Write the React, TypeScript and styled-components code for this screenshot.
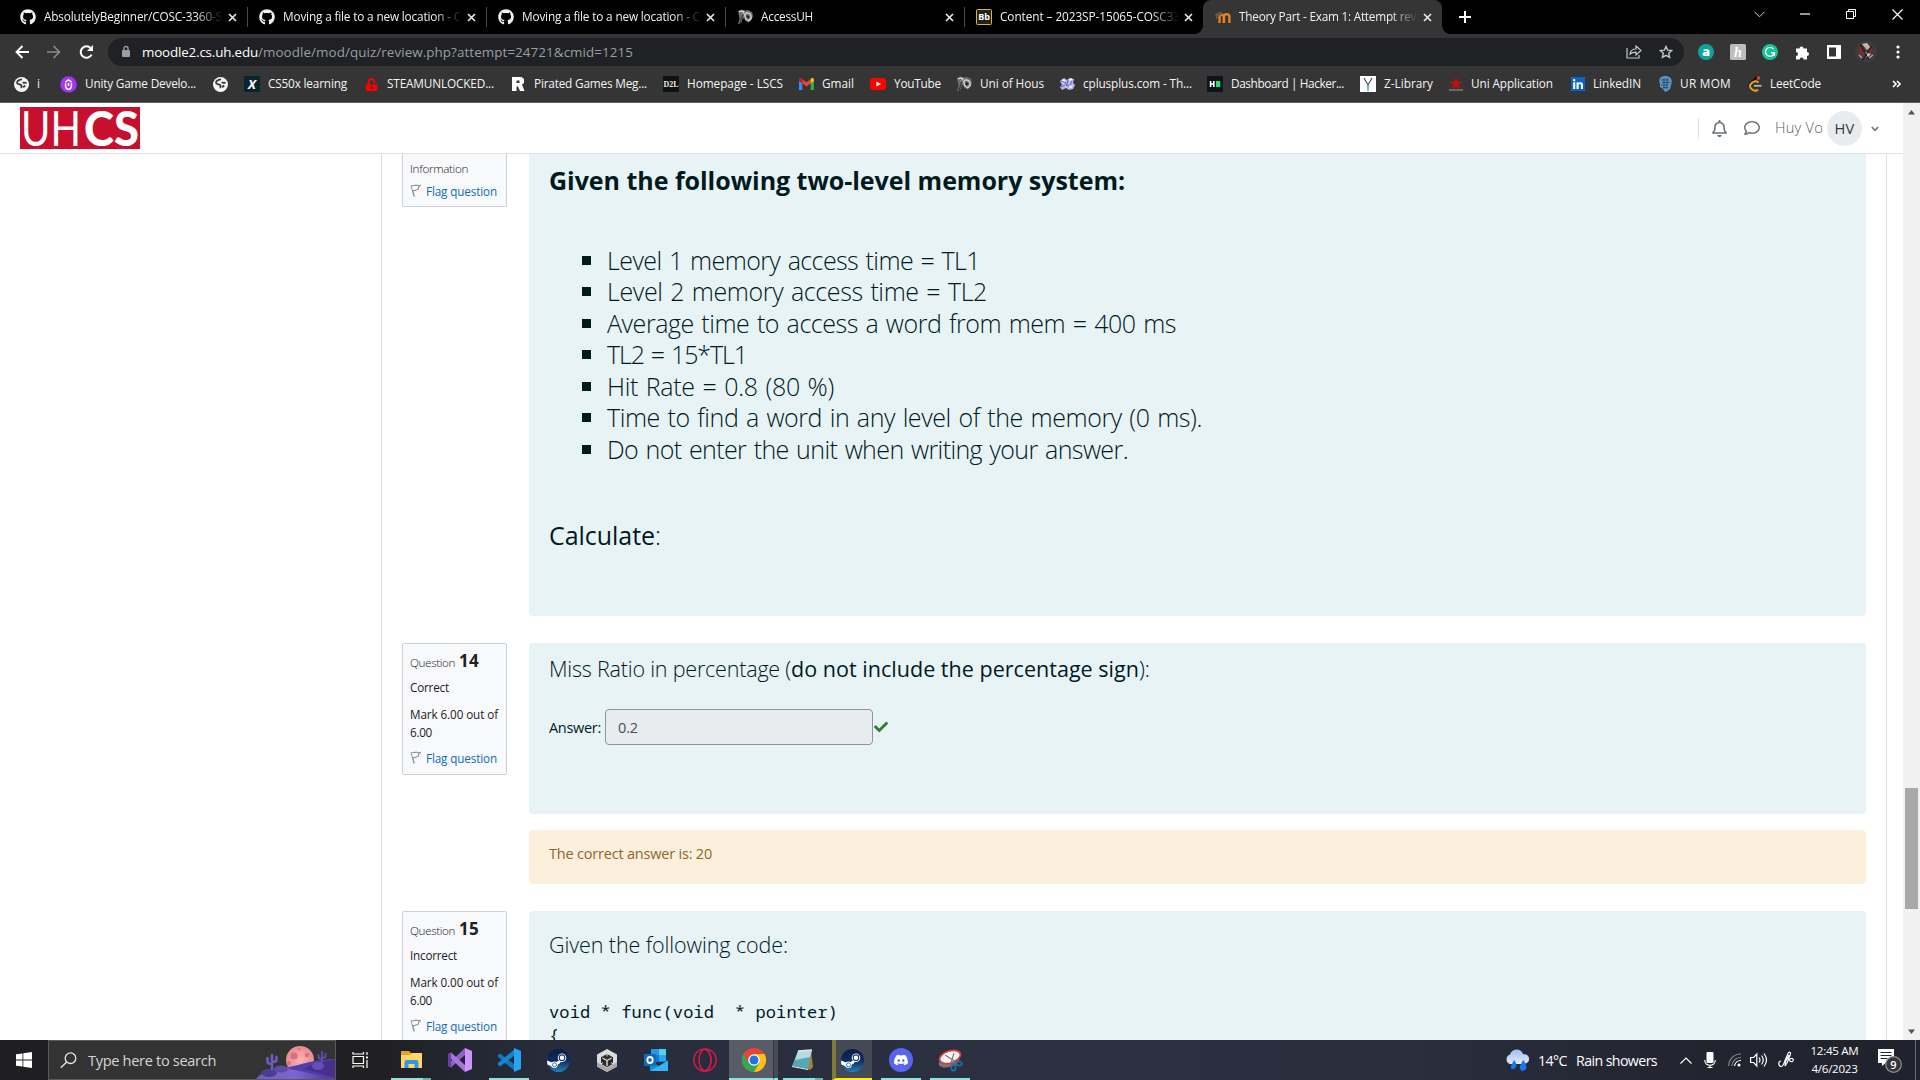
import React, { useLayoutEffect, useRef, useState } from 'react';
import styled, { createGlobalStyle } from 'styled-components';
import { FaGithub, FaLinkedin, FaRegBell, FaRegComment, FaDiscord, FaCheck, FaUnlockAlt } from 'react-icons/fa';

const SANS = '"Open Sans", "Noto Sans", sans-serif';

const Global = createGlobalStyle`
  * { box-sizing: border-box; }
  body { margin: 0; overflow: hidden; font-family: ${SANS}; background: #fff; }
  svg { display: block; flex: none; }
`;

/* ---------- text whose tracking is adjusted to reach a given width ---------- */

const Run = styled.span`
  white-space: pre;
  flex: none;
`;

function Fit({ w, children }: { w: number; children: string }) {
  const ref = useRef<HTMLSpanElement>(null);
  const [track, setTrack] = useState(0);
  useLayoutEffect(() => {
    if (!ref.current) return;
    const natural = ref.current.getBoundingClientRect().width;
    setTrack((w - natural) / children.length);
  }, []);
  return (
    <Run ref={ref} style={{ letterSpacing: `${track}px` }}>
      {children}
    </Run>
  );
}

/* ---------- frame ---------- */

const Screen = styled.div`
  width: 1920px;
  height: 1080px;
  display: flex;
  flex-direction: column;
  overflow: hidden;
`;

const TabStrip = styled.div`
  height: 34px;
  flex: none;
  display: flex;
  background: #000;
  padding-left: 9px;
`;

const Tab = styled.div<{ $last?: boolean }>`
  width: 239px;
  height: 34px;
  display: flex;
  align-items: center;
  padding: 0 11px 0 11px;
  font-size: 11.8px;
  color: #f1f1f1;
  background: linear-gradient(#4a4a4a, #4a4a4a) ${(p) => (p.$last ? '260px' : '238px')} 7px / 1px 20px no-repeat;
`;

const ActiveTab = styled.div`
  width: 239px;
  height: 34px;
  display: flex;
  align-items: center;
  padding: 0 10px 0 12px;
  margin-left: -1px;
  font-size: 11.8px;
  color: #f1f1f1;
  background: #353535;
  border-radius: 8px 8px 0 0;
  position: relative;
  &::before,
  &::after {
    content: '';
    position: absolute;
    bottom: 0;
    width: 8px;
    height: 8px;
  }
  &::before { left: -8px; background: radial-gradient(circle at 0 0, transparent 7.5px, #353535 8px); }
  &::after { right: -8px; background: radial-gradient(circle at 100% 0, transparent 7.5px, #353535 8px); }
`;

const TabTitle = styled.div`
  flex: 1;
  height: 20px;
  line-height: 18px;
  margin: 0 5px 0 8px;
  overflow: hidden;
  display: flex;
  mask-image: linear-gradient(90deg, #000 calc(100% - 28px), transparent);
`;

const NewTab = styled.div`
  width: 44px;
  padding-left: 2px;
  display: grid;
  place-items: center;
`;

const WindowButtons = styled.div`
  margin-left: auto;
  display: flex;
  height: 28px;
  > div { width: 46px; display: grid; place-items: center; }
`;

const Toolbar = styled.div`
  height: 36px;
  flex: none;
  display: flex;
  align-items: center;
  background: #353535;
  padding-left: 6px;
`;

const ToolSlot = styled.div`
  width: 32px;
  display: grid;
  place-items: center;
`;

const Omnibox = styled.div`
  width: 1576px;
  height: 28px;
  margin: 0 6px;
  border-radius: 14px;
  background: #202124;
  display: flex;
  align-items: center;
  padding: 0 2px 0 12px;
  color: #9a9da1;
  font-size: 13.4px;
  b { font-weight: 400; color: #fff; }
`;

const Address = styled.div`
  flex: 1;
  display: flex;
  margin-left: 11px;
`;

const Bookmarks = styled.div`
  height: 33px;
  flex: none;
  display: flex;
  align-items: center;
  background: #353535;
  border-bottom: 1px solid #5f5f5f;
  padding: 0 19px 4px 14px;
  font-size: 11.8px;
  line-height: 16px;
  color: #f4f4f4;
`;

const Bookmark = styled.div<{ $w: number }>`
  width: ${(p) => p.$w}px;
  display: flex;
  align-items: center;
  gap: 8px;
  > span { padding-bottom: 2px; }
`;

const More = styled.div`
  margin-left: auto;
`;

/* ---------- site ---------- */

const Page = styled.div`
  flex: 1;
  min-height: 0;
  display: flex;
`;

const Site = styled.div`
  width: 1903px;
  display: flex;
  flex-direction: column;
`;

const SiteHeader = styled.div`
  height: 51px;
  flex: none;
  border-bottom: 1px solid #dee2e6;
  display: flex;
  align-items: center;
  padding: 0 24px 0 20px;
`;

const UserNav = styled.div`
  margin-left: auto;
  display: flex;
  align-items: center;
  color: #6a737b;
  font-size: 14.6px;
  font-weight: 300;
`;

const Divider = styled.div`
  width: 1px;
  height: 21px;
  background: #dee2e6;
  margin-right: 12px;
`;

const NavIcons = styled.div`
  display: flex;
  align-items: center;
  gap: 16px;
`;

const UserName = styled.div`
  padding-bottom: 3px;
  margin: 0 4px 0 15px;
  display: flex;
  color: #58616a;
`;

const Avatar = styled.div`
  width: 35px;
  height: 35px;
  border-radius: 50%;
  background: #e9ecef;
  color: #343a40;
  font-weight: 400;
  display: flex;
  align-items: center;
  justify-content: center;
`;

const Chevron = styled.div`
  margin: 2px 0 0 9px;
`;

const Main = styled.div`
  flex: 1;
  min-height: 0;
  overflow: hidden;
  margin: 0 16px 0 381px;
  border: solid #dcdfe3;
  border-width: 0 1px;
  padding: 0 20px;
  display: flex;
  flex-direction: column;
  gap: 27px;
`;

const QuestionRow = styled.div`
  display: grid;
  grid-template-columns: 105px 1337px;
  column-gap: 22px;
  align-items: start;
  flex: none;
`;

const Info = styled.div<{ $clipped?: boolean }>`
  height: ${(p) => (p.$clipped ? 53 : 132)}px;
  border: 1px solid #cad0d7;
  border-top-width: ${(p) => (p.$clipped ? 0 : 1)}px;
  border-radius: ${(p) => (p.$clipped ? '0 0 2px 2px' : '2px')};
  background: #f8f9fa;
  padding: ${(p) => (p.$clipped ? 4.6 : 6)}px 0 0 7px;
  font-size: 11.7px;
  line-height: 18px;
  color: #1d2125;
`;

const InfoTitle = styled.div`
  display: flex;
  align-items: baseline;
  gap: 4px;
  line-height: 22px;
  height: 22px;
  font-weight: 300;
  b { font-size: 17px; font-weight: 700; display: flex; }
`;

const InfoLine = styled.div<{ $gap?: number; $light?: boolean }>`
  margin-top: ${(p) => p.$gap ?? 0}px;
  height: 18px;
  display: flex;
  font-weight: ${(p) => (p.$light ? 300 : 400)};
`;

const FlagLine = styled(InfoLine)`
  color: #0f6cbf;
  align-items: center;
  gap: 5px;
`;

const Stack = styled.div`
  display: flex;
  flex-direction: column;
  gap: 16px;
`;

const Card = styled.div<{ $h: number; $top: number; $flat?: boolean }>`
  height: ${(p) => p.$h}px;
  padding: ${(p) => p.$top}px 20px 0;
  background: #e7f3f5;
  color: #001a1e;
  border-radius: ${(p) => (p.$flat ? '0 0 4px 4px' : '4px')};
`;

const Feedback = styled.div`
  height: 54px;
  padding: 13px 20px;
  border-radius: 4px;
  background: #fcefdc;
  color: #8e662e;
  font-size: 14.5px;
  line-height: 22.5px;
  display: flex;
`;

const Heading = styled.div`
  font-size: 25px;
  line-height: 31.5px;
  font-weight: 700;
  display: flex;
`;

const List = styled.div`
  margin: 48.5px 0 55px;
  padding-left: 33px;
  font-size: 25px;
  font-weight: 300;
  line-height: 31.5px;
  word-spacing: 1.5px;
`;

const Item = styled.div`
  display: flex;
  align-items: center;
  gap: 16px;
  height: 31.5px;
  &::before { content: ''; width: 9px; height: 9px; background: #001a1e; }
`;

const Calculate = styled.div`
  font-size: 25px;
  line-height: 31.5px;
  display: flex;
  i { font-style: normal; font-weight: 300; }
`;

const Prompt = styled.div`
  font-size: 21.5px;
  line-height: 27px;
  font-weight: 300;
  display: flex;
  b { font-weight: 400; display: flex; }
`;

const AnswerLine = styled.div`
  margin-top: 27px;
  display: flex;
  align-items: center;
  font-size: 14.5px;
`;

const AnswerBox = styled.div`
  width: 268px;
  height: 36px;
  margin: 0 1px 0 4px;
  padding: 0 12px;
  display: flex;
  align-items: center;
  border: 1px solid #8f959e;
  border-radius: 4px;
  background: #e9ecef;
  color: #495057;
`;

const Code = styled.div`
  margin-top: 43px;
  font: 17px/22.5px 'Noto Sans Mono', 'DejaVu Sans Mono', monospace;
`;

const ScrollTrack = styled.div`
  width: 17px;
  background: #f1f1f1;
  display: flex;
  flex-direction: column;
  align-items: center;
  padding: 7px 0 6px;
`;

const Thumb = styled.div`
  width: 13px;
  height: 121px;
  margin: 673px 0 auto;
  background: #a8a8a8;
`;

/* ---------- taskbar ---------- */

const Taskbar = styled.div`
  height: 40px;
  flex: none;
  display: flex;
  align-items: center;
  color: #fff;
  background: linear-gradient(90deg, #1f1f21 0, #202023 380px, #252b39 520px, #2c3142 1000px, #292d3c 1450px, #22242f 1700px, #20232e 100%);
`;

const StartButton = styled.div`
  width: 48px;
  display: grid;
  place-items: center;
`;

const Search = styled.div`
  width: 288px;
  height: 40px;
  background: #333;
  border: 1px solid #5a5a5a;
  display: flex;
  align-items: center;
  padding-left: 11px;
  font-size: 14.6px;
  color: #d6d6d6;
  gap: 11px;
  > svg:last-child { margin: 0 0 0 auto; }
`;

const TaskView = styled.div`
  width: 50px;
  padding-right: 2px;
  display: grid;
  place-items: center;
`;

const TaskApp = styled.div<{ $line?: string; $bg?: string; $two?: boolean }>`
  width: 49px;
  height: 40px;
  padding: 0 4px 0 5px;
  display: flex;
  > div {
    flex: 1;
    display: grid;
    place-items: center;
    background: ${(p) => p.$bg ?? 'transparent'};
    border-bottom: 2px solid ${(p) => p.$line ?? 'transparent'};
    padding-top: 2px;
  }
  &::after {
    content: '';
    display: ${(p) => (p.$two ? 'block' : 'none')};
    width: 8px;
    border-bottom: 2px solid #66b3a9;
  }
  > div > svg { margin-right: ${(p) => (p.$two ? -8 : 0)}px; }
`;

const ChromeSlot = styled.div`
  width: 49px;
  height: 40px;
  display: flex;
  > div {
    width: 44px;
    background: #585c68;
    border-bottom: 2px solid #8ee4d8;
    padding: 2px 0 0 5px;
    display: grid;
    place-items: center;
  }
  &::after {
    content: '';
    width: 4px;
    background: #474b54;
    border-left: 1px solid #2e333f;
    border-bottom: 2px solid #8ee4d8;
  }
`;

const SteamSlot = styled(TaskApp)`
  > div {
    border-left: 4px solid #7d7a3a;
    border-bottom: 2px solid #fff100;
    padding-right: 4px;
  }
`;

const Tray = styled.div`
  margin-left: auto;
  display: flex;
  align-items: center;
  height: 40px;
  font-size: 14.2px;
  padding-right: 4px;
`;

const Weather = styled.div`
  display: flex;
  align-items: center;
  gap: 9px;
  margin-right: 23px;
`;

const TrayIcons = styled.div`
  display: flex;
  align-items: center;
  margin-right: 15px;
`;

const Clock = styled.div`
  width: 49px;
  display: flex;
  flex-direction: column;
  align-items: center;
  font-size: 11.6px;
  line-height: 18px;
  margin-right: 19px;
  padding-bottom: 1px;
`;

const ShowDesktop = styled.div`
  width: 1px;
  height: 40px;
  margin-left: 11px;
  background: #6b6d75;
`;

/* ---------- drawings ---------- */

const Close = () => (
  <svg width="9" height="9" viewBox="0 0 9 9"><path d="M1 1l7 7M8 1l-7 7" stroke="#e8e8e8" strokeWidth="1.7" /></svg>
);

const Globe = () => (
  <svg width="15" height="15" viewBox="0 0 14 14">
    <circle cx="7" cy="7" r="7" fill="#f4f4f4" />
    <path d="M7.5 2.2c-2.6.2-5 1.8-4.6 3.4.5 1.7 3 .9 4 2.1.6.9-.6 1.6.2 2.6M8 5.2l3.8.3M8.5 9.5l2-1.6" stroke="#353535" strokeWidth="1.7" fill="none" />
  </svg>
);

const Cougar = () => (
  <svg width="16" height="16" viewBox="0 0 16 16">
    <path d="M1 2l3-1.500 4 1 3-.5 4 2 1 4-1.500 4-3 2.500-3-1.500-1.500-3-1.500 1-1 3.500L1 15.500l1.500-6z" fill="#6f6f73" />
    <path d="M2 3l3-1 2 1-2 3M7.500 5.500l2.500-1.800 3.500 1.500.8 3.800-2.500 2.700-2.800-1.500z" fill="none" stroke="#dcdcdc" strokeWidth="1.200" />
    <circle cx="10.800" cy="7.800" r="1.400" fill="#222" />
    <path d="M6 4.500L3 14" stroke="#222" strokeWidth=".9" />
  </svg>
);

const Box = ({ bg, fg, t, size = 11, stroke, family = 'Open Sans', len, round = 0, style }: any) => (
  <svg width="16" height="16" viewBox="0 0 16 16">
    <rect x=".5" y=".5" width="15" height="15" rx={round} fill={bg} stroke={stroke ?? bg} />
    <text x="8" y={8 + size * 0.36} textAnchor="middle" fontFamily={family} fontStyle={style} fontWeight="700" fontSize={size} fill={fg} textLength={len} lengthAdjust="spacingAndGlyphs">{t}</text>
  </svg>
);

const Ruffle = () => (
  <svg width="15" height="14" viewBox="0 0 15 14">
    <path d="M1 0h9.500l2.500 2v4l-2 1.500L13.500 14H9L7 9.500H5.500V14H1z" fill="#fff" /><path d="M5.500 3.500h3v2.500h-3z" fill="#353535" />
  </svg>
);

const MoodleM = () => (
  <svg width="16" height="16" viewBox="0 0 16 16">
    <path d="M4.500 14V7.800a2.100 2.100 0 0 1 4.200 0V14M9 14V7.800a2.700 2.700 0 0 1 5.400 0V14" fill="none" stroke="#e8812a" strokeWidth="2.300" />
    <path d="M0 6l5-2.500 2 .5-2 2-3.500.500V10" fill="none" stroke="#6b5a4d" strokeWidth="1.300" />
  </svg>
);

const UnityBadge = () => (
  <svg width="17" height="17" viewBox="0 0 17 17">
    <circle cx="8.5" cy="8.5" r="8.3" fill="#a435f0" />
    <path d="M5.6 7.3v3a2.9 2.9 0 0 0 5.8 0v-3M5.4 6.2l3.1-2.2 3.1 2.2M8.5 7v3" stroke="#fff" strokeWidth="1.5" fill="none" />
  </svg>
);

const Gmail = () => (
  <svg width="15" height="12" viewBox="0 0 15 12">
    <path d="M0 1.5V12h3.4V4.5z" fill="#4285f4" /><path d="M15 1.5V12h-3.4V4.5z" fill="#34a853" />
    <path d="M3.4 1.2v4.2l4.1 3.1 4.1-3.1V1.2L7.5 4.3z" fill="#ea4335" />
    <path d="M0 1.6C0 0 2-.6 3.4.7v4.7L0 3z" fill="#c5221f" /><path d="M15 1.6C15 0 13-.6 11.6.7v4.7L15 3z" fill="#fbbc04" />
  </svg>
);

const YouTube = () => (
  <svg width="16" height="12" viewBox="0 0 16 12"><rect width="16" height="12" rx="3" fill="#f00" /><path d="M6.3 3.4v5.2L11 6z" fill="#fff" /></svg>
);

const Cpp = () => (
  <svg width="16" height="14" viewBox="0 0 16 14">
    <path d="M1 4l4-3 3 2 3-2 4 1-1 4 2 2-2 4-4 1-3-2-4 2-2-3 2-2z" fill="#b9b9f3" />
    <path d="M2 4l4 1 2 4M9 3l-1 5 4 3M13 4l-2 4M2 10l4-2" stroke="#5b5bb4" strokeWidth="1" fill="none" />
    <path d="M3 3l3 1M10 3l3-1M10 10l3 0" stroke="#fff" strokeWidth="1.400" />
  </svg>
);

const Hacker = () => (
  <svg width="16" height="16" viewBox="0 0 16 16">
    <rect width="16" height="16" fill="#0e141e" /><path d="M3.6 5v6M6.8 5v6M3.6 8h3.2" stroke="#fff" strokeWidth="1.6" /><rect x="9" y="5" width="4.2" height="6" fill="#1ee26b" />
  </svg>
);

const ZLib = () => (
  <svg width="16" height="16" viewBox="0 0 16 16">
    <rect width="16" height="16" fill="#fff" /><path d="M4 2l3.400 6h1.200L12 2M8 8v3" stroke="#444" strokeWidth="1.100" fill="none" /><path d="M8 11v4" stroke="#3ba9d8" strokeWidth="1.400" />
  </svg>
);

const Star = () => (
  <svg width="14" height="14" viewBox="0 0 14 14">
    <path d="M7 0l1.800 4.400 4.700.2-3.700 3 1.300 4.700L7 9.600l-4.100 2.700 1.300-4.700L.5 4.600l4.700-.2z" fill="#c00d0d" /><path d="M0 13h14" stroke="#777" strokeWidth="1.600" />
  </svg>
);

const BlueHead = () => (
  <svg width="13" height="16" viewBox="0 0 13 16">
    <path d="M6 0c4 0 7 2 6.700 6 0 2-1 3-1 5 0 2-2 3-3 4L6 16l-2-3-3-2 0-3C-1 4 1 0 6 0z" fill="#5d93bd" />
    <path d="M2 4h8M3 6.500h8M2 9h7M4 11.500h5M5 2v11M8 2v11" stroke="#1e3e57" strokeWidth=".7" />
  </svg>
);

const LeetCode = () => (
  <svg width="14" height="16" viewBox="0 0 14 16">
    <path d="M8.500 1L2 8c-1 1-1 2 0 3" stroke="#111" strokeWidth="1.900" fill="none" />
    <path d="M10.500 6.500C8 4 5 5.500 2.800 8 1.500 9.600 1.800 11 3 12.300l1.400 1.400c1.500 1.500 4 1.400 5.500-.2" stroke="#f7a11b" strokeWidth="1.900" fill="none" />
    <path d="M6 9.800h7.500" stroke="#bbb" strokeWidth="1.700" /><circle cx="10.500" cy="2" r="1.700" fill="#e04040" />
  </svg>
);

const FlagIcon = () => (
  <svg width="11" height="13" viewBox="0 0 11 13">
    <path d="M1.300 1.500l2.900 11" stroke="#999" strokeWidth="1.500" fill="none" /><path d="M1.500 1.500c2 1 3.500-.8 5-.3 1 .3 2 .7 3.500.4C9 2.500 8.300 3.500 8 5.500 6.500 5.200 5.500 6.700 3 6.500" stroke="#8a8a8a" fill="#fff" strokeWidth="1.100" />
  </svg>
);

const Desert = () => (
  <svg width="79" height="38" viewBox="0 0 79 38">
    <defs>
      <linearGradient id="hill" x1="0" y1="0" x2="1" y2="0"><stop offset="0" stopColor="#6f5cc0" /><stop offset=".5" stopColor="#7a66cf" /><stop offset="1" stopColor="#4a3394" /></linearGradient>
      <radialGradient id="moon"><stop offset="0" stopColor="#f9b3b5" /><stop offset="1" stopColor="#e88a94" /></radialGradient>
    </defs>
    <circle cx="44" cy="19" r="14" fill="url(#moon)" />
    <circle cx="38" cy="15" r="3.600" fill="#d9707c" /><circle cx="51" cy="14" r="2.200" fill="#d9707c" /><circle cx="43" cy="8" r="1.500" fill="#d9707c" /><circle cx="33" cy="22" r="2" fill="#d9707c" />
    <path d="M0 38c6-8 18-10 30-12 14-1 24-8 49-7v19z" fill="url(#hill)" />
    <path d="M30 27c16-3 25-8 49-9v20H70c-8-5-22-7-40-11z" fill="#543ea8" /><path d="M48 28l31 9V19c-10 0-22 4-31 9z" fill="#46308c" />
    <ellipse cx="13" cy="32" rx="8" ry="4" fill="#4b3d94" /><ellipse cx="25" cy="28" rx="7" ry="3.500" fill="#5b4bab" /><ellipse cx="62" cy="25" rx="6" ry="4" fill="#6250b5" />
    <path d="M16 28V14M11.500 17v4q0 2 4.500 2M20.500 16v3q0 2-4.500 2" stroke="#6c5bc4" strokeWidth="2.600" fill="none" strokeLinecap="round" />
    <path d="M66 21V11M62.500 14v2q0 2 3.500 2M69.500 13v2q0 2-3.500 2" stroke="#5f4db3" strokeWidth="1.800" fill="none" strokeLinecap="round" />
  </svg>
);

const Explorer = () => (
  <svg width="23" height="20" viewBox="0 0 23 20">
    <path d="M1 1h8l2 2h11v14H1z" fill="#e8a317" /><path d="M1 5h9l2-2h10v15H1z" fill="#ffd766" /><path d="M4.500 18v-6q0-2 2-2h10q2 0 2 2v6h-4v-4h-6v4z" fill="#3595e6" />
  </svg>
);

const VS = () => (
  <svg width="24" height="24" viewBox="0 0 24 24">
    <path d="M0 18l3 1.500L17 7V0L0 16z" fill="#8e5fc4" /><path d="M0 6l3-1.500L17 17v7L0 8z" fill="#a674dc" /><path d="M0 6v12l3 1.500V4.500z" fill="#6a3fa0" /><path d="M17 0l7 3v18l-7 3z" fill="#cf94fa" />
  </svg>
);

const VSCode = () => (
  <svg width="24" height="24" viewBox="0 0 24 24">
    <path d="M1 7l2-1.600L18 17v6L1 9z" fill="#0f79bd" /><path d="M1 17l2 1.600L18 7V1L1 15z" fill="#1087cf" /><path d="M17 0l7 3v18l-7 3z" fill="#2aa4ef" />
  </svg>
);

const Steam = () => (
  <svg width="23" height="23" viewBox="0 0 23 23">
    <defs><linearGradient id="st" x1="0" y1="0" x2="0" y2="1"><stop offset="0" stopColor="#0b1b4a" /><stop offset=".5" stopColor="#0d2c5c" /><stop offset="1" stopColor="#2280b8" /></linearGradient></defs>
    <circle cx="11.500" cy="11.500" r="11.500" fill="url(#st)" />
    <path d="M0 11.500l6.800 2.800 4.500-2.300 3.500-1.500-2 4-3 1.500-2 2.500-3-1-4.400-2z" fill="#fff" />
    <circle cx="15" cy="8.700" r="4.300" fill="#fff" /><circle cx="15" cy="8.700" r="2.800" fill="#fff" stroke="#183463" strokeWidth="1.100" /><circle cx="7.500" cy="15.800" r="3.200" fill="#fff" /><circle cx="7.500" cy="15.800" r="2" fill="none" stroke="#1c5688" strokeWidth=".8" />
  </svg>
);

const Unity = () => (
  <svg width="22" height="23" viewBox="0 0 22 23">
    <path d="M11 0l10 5.500v12L11 23 1 17.500v-12z" fill="#dcdcdc" /><path d="M1 13l10 6 10-6v4.500L11 23 1 17.500z" fill="#a8a8a8" />
    <path d="M11 5l6 3.300v6.500L11 18.300l-6-3.500V8.300z" fill="#2a2a2a" /><path d="M11 11.500V17M11 11.500L6.500 9M11 11.500L15.500 9" stroke="#ddd" strokeWidth="1.400" /><path d="M11 5v2.500M5 14.800l2-1.200M17 14.800l-2-1.200" stroke="#ddd" strokeWidth="1" />
  </svg>
);

const Outlook = () => (
  <svg width="24" height="22" viewBox="0 0 24 22">
    <rect x="7" y="0" width="15" height="13" fill="#1877cf" /><rect x="15" y="0" width="7" height="6" fill="#50d0f6" /><rect x="7" y="0" width="8" height="6" fill="#2797e8" /><rect x="15" y="6" width="7" height="6" fill="#2aa6ef" />
    <path d="M6 12l9 5 9-6v11H6z" fill="#1490df" /><path d="M6 22L24 12v10z" fill="#35b5f5" />
    <rect x="0" y="5" width="12" height="12" rx="1" fill="#0f6cbd" /><ellipse cx="6" cy="11" rx="2.700" ry="3" fill="none" stroke="#fff" strokeWidth="1.800" />
  </svg>
);

const Opera = () => (
  <svg width="24" height="24" viewBox="0 0 24 24" fill="none" stroke="#d9194a">
    <circle cx="12" cy="12" r="11.200" strokeWidth="1.300" /><ellipse cx="12" cy="12" rx="6" ry="10.800" strokeWidth="1.500" /><path d="M14 3c5 2 6 15 0 18" strokeWidth="1.100" />
  </svg>
);

const Chrome = () => (
  <svg width="24" height="24" viewBox="0 0 24 24">
    <circle cx="12" cy="12" r="12" fill="#ea4335" />
    <path d="M1.600 6A12 12 0 0 0 12 24l5.200-9L12 12l-5.200 3z" fill="#34a853" />
    <path d="M12 6h10.400A12 12 0 0 1 12 24l5.200-9z" fill="#fbc116" />
    <circle cx="12" cy="12" r="5.800" fill="#fff" /><circle cx="12" cy="12" r="4.500" fill="#1f74e8" />
  </svg>
);

const Notepad = () => (
  <svg width="24" height="22" viewBox="0 0 24 22">
    <path d="M20 2l2 16-3 3-3-1z" fill="#a8823c" /><path d="M7 2l14-1-4 19L1 17z" fill="#59a6b4" /><path d="M7 2l14-1-2 7L4 11z" fill="#b5dbe2" /><path d="M1 17l16 3v1L1 18z" fill="#e9f4f6" /><path d="M7 2l14-1" stroke="#e5e5e5" strokeWidth="1.500" />
  </svg>
);

const Snip = () => (
  <svg width="25" height="23" viewBox="0 0 25 23">
    <ellipse cx="11" cy="13" rx="10.500" ry="5" fill="#777" transform="rotate(-14 11 13)" /><ellipse cx="12" cy="8" rx="10.800" ry="6" fill="#f7f4f4" stroke="#e0393e" strokeWidth="1.700" transform="rotate(-18 12 8)" />
    <path d="M7 6l11 7M16 4l-3 10" stroke="#777" strokeWidth="1.100" /><ellipse cx="15.500" cy="18.500" rx="2.200" ry="3.200" fill="none" stroke="#1e6fa8" strokeWidth="1.700" /><ellipse cx="21" cy="14.500" rx="3" ry="2" fill="none" stroke="#1e6fa8" strokeWidth="1.700" transform="rotate(20 21 14.500)" />
  </svg>
);

const Rain = () => (
  <svg width="24" height="22" viewBox="0 0 24 22">
    <defs><linearGradient id="cl" x1="0" y1="0" x2="0" y2="1"><stop offset="0" stopColor="#9dbcf0" /><stop offset="1" stopColor="#e3edfb" /></linearGradient></defs>
    <path d="M5 15a5 5 0 0 1 0-9.500C7-1 16-1 18 5c8 0 8 9 1 10z" fill="url(#cl)" /><path d="M9 11c3 3 3 8 0 9-3 0-3.500-1-3-3z M18 11c4 4 5 10 0 11-3 0-3.500-2-3-5z" fill="#1478f0" />
  </svg>
);

/* ---------- data ---------- */

const tabs = [
  { icon: <FaGithub size={16} />, title: 'AbsolutelyBeginner/COSC-3360-S', w: 178 },
  { icon: <FaGithub size={16} />, title: 'Moving a file to a new location - C', w: 178 },
  { icon: <FaGithub size={16} />, title: 'Moving a file to a new location - C', w: 178 },
  { icon: <Cougar />, title: 'AccessUH', w: 52 },
  { icon: <Box bg="#222" stroke="#e0b33c" fg="#fff" t="Bb" size={9} round={1} />, title: 'Content – 2023SP-15065-COSC33', w: 180 },
];

const bookmarks: { icon: React.ReactNode; label?: string; tw?: number; w: number }[] = [
  { icon: <Globe />, label: 'i', tw: 3, w: 46 },
  { icon: <UnityBadge />, label: 'Unity Game Develo...', tw: 111, w: 153 },
  { icon: <Globe />, w: 31 },
  { icon: <Box bg="#0b2530" fg="#fff" t="X" size={13} style="italic" />, label: 'CS50x learning', tw: 79, w: 120 },
  { icon: <svg width="15" height="15"><FaUnlockAlt x="1" y="1" size={13} color="#f00" /></svg>, label: 'STEAMUNLOCKED...', tw: 107, w: 147 },
  { icon: <Ruffle />, label: 'Pirated Games Meg...', tw: 113, w: 152 },
  { icon: <Box bg="#111" fg="#eee" t="D2L" size={8} family="Liberation Serif" len={15} />, label: 'Homepage - LSCS', tw: 96, w: 136 },
  { icon: <Gmail />, label: 'Gmail', tw: 32, w: 71 },
  { icon: <YouTube />, label: 'YouTube', tw: 47, w: 86 },
  { icon: <Cougar />, label: 'Uni of Hous', tw: 64, w: 103 },
  { icon: <Cpp />, label: 'cplusplus.com - Th...', tw: 109, w: 148 },
  { icon: <Hacker />, label: 'Dashboard | Hacker...', tw: 113, w: 153 },
  { icon: <ZLib />, label: 'Z-Library', tw: 49, w: 89 },
  { icon: <Star />, label: 'Uni Application', tw: 82, w: 122 },
  { icon: <svg width="14" height="14"><rect width="14" height="14" rx="1" fill="#fff" /><FaLinkedin x="-1" y="-1" size={16} color="#0a66c2" /></svg>, label: 'LinkedIN', tw: 48, w: 88 },
  { icon: <BlueHead />, label: 'UR MOM', tw: 51, w: 89 },
  { icon: <LeetCode />, label: 'LeetCode', tw: 51, w: 80 },
];

const facts: [string, number][] = [
  ['Level 1 memory access time = TL1', 373],
  ['Level 2 memory access time = TL2', 380],
  ['Average time to access a word from mem = 400 ms', 569],
  ['TL2 = 15*TL1', 140],
  ['Hit Rate = 0.8 (80 %)', 227],
  ['Time to find a word in any level of the memory (0 ms).', 595],
  ['Do not enter the unit when writing your answer.', 521],
];

const FlagLink = ({ gap }: { gap: number }) => (
  <FlagLine $gap={gap}><FlagIcon /><Fit w={71}>Flag question</Fit></FlagLine>
);

function QuestionInfo({ n, state, mark }: { n: string; state: [string, number]; mark: string }) {
  return (
    <Info>
      <InfoTitle><Fit w={45}>Question</Fit><b><Fit w={20}>{n}</Fit></b></InfoTitle>
      <InfoLine $gap={5.7}><Fit w={state[1]}>{state[0]}</Fit></InfoLine>
      <InfoLine $gap={9}><Fit w={88}>{mark}</Fit></InfoLine>
      <InfoLine><Fit w={22}>6.00</Fit></InfoLine>
      <FlagLink gap={8} />
    </Info>
  );
}

export default function App() {
  return (
    <Screen>
      <Global />
      <TabStrip>
        {tabs.map((t, i) => (
          <Tab key={i} $last={i === 4}>
            {t.icon}
            <TabTitle><Fit w={t.w}>{t.title}</Fit></TabTitle>
            <Close />
          </Tab>
        ))}
        <ActiveTab>
          <MoodleM />
          <TabTitle><Fit w={180}>Theory Part - Exam 1: Attempt revi</Fit></TabTitle>
          <Close />
        </ActiveTab>
        <NewTab><svg width="12" height="12"><path d="M6 0v12M0 6h12" stroke="#fff" strokeWidth="2" /></svg></NewTab>
        <WindowButtons>
          <div><svg width="11" height="7"><path d="M.5.8l5 5 5-5" stroke="#ccc" fill="none" /></svg></div>
          <div><svg width="10" height="2"><path d="M0 1h10" stroke="#fff" strokeWidth="1.200" /></svg></div>
          <div><svg width="10" height="10" fill="none" stroke="#fff"><path d="M.5 2.500h7v7h-7zM2.500 2.500v-2h7v7h-2" /></svg></div>
          <div><svg width="11" height="11"><path d="M.5.5l10 10M10.500.5l-10 10" stroke="#fff" strokeWidth="1.100" /></svg></div>
        </WindowButtons>
      </TabStrip>

      <Toolbar>
        <ToolSlot><svg width="14" height="14" fill="none" stroke="#fff" strokeWidth="1.900"><path d="M14 7H1.500M7.500 1L1.500 7l6 6" /></svg></ToolSlot>
        <ToolSlot><svg width="14" height="14" fill="none" stroke="#8a8a8a" strokeWidth="1.700"><path d="M0 7h12.500M6.500 1l6 6-6 6" /></svg></ToolSlot>
        <ToolSlot><svg width="15" height="14" fill="none" stroke="#fff" strokeWidth="2"><path d="M12.600 9.600A5.700 5.700 0 1 1 11.800 3.300" /><path d="M14 0v6H8z" fill="#fff" stroke="none" /></svg></ToolSlot>
        <Omnibox>
          <svg width="11" height="14"><rect x="2" y="5" width="8" height="7" rx="1" fill="#9a9da1" /><path d="M4 6V3.500a2 2 0 0 1 4 0V6" stroke="#9a9da1" strokeWidth="1.400" fill="none" /></svg>
          <Address><b><Fit w={116}>moodle2.cs.uh.edu</Fit></b><Fit w={375}>/moodle/mod/quiz/review.php?attempt=24721&cmid=1215</Fit></Address>
          <ToolSlot><svg width="16" height="14" fill="none" stroke="#c4c7ca" strokeWidth="1.200"><path d="M1 3v10h12v-3M4 9c.5-3.500 2.500-5 6-5V1l5 4.500-5 4.500V7.200C7.500 7.200 5.500 7.600 4 9z" /></svg></ToolSlot>
          <ToolSlot><svg width="14" height="14" fill="none" stroke="#c4c7ca" strokeWidth="1.400"><path d="M7 1.500l1.700 3.700 4 .4-3 2.700.9 4L7 10.300l-3.600 2 .9-4-3-2.700 4-.4z" /></svg></ToolSlot>
        </Omnibox>
        <ToolSlot><svg width="16" height="16"><circle cx="8" cy="8" r="8" fill="#0aa49b" /><text x="8" y="12.200" textAnchor="middle" fontSize="13" fontWeight="800" fontFamily="Open Sans" fill="#fff">a</text></svg></ToolSlot>
        <ToolSlot><svg width="16" height="16"><rect width="16" height="16" rx="1.500" fill="#bdbdbd" /><text x="8" y="12.500" textAnchor="middle" fontSize="14" fontWeight="700" fontStyle="italic" fontFamily="Liberation Serif" fill="#fff">h</text></svg></ToolSlot>
        <ToolSlot><svg width="16" height="16"><circle cx="8" cy="8" r="8" fill="#15c39a" /><path d="M11.500 5A4.500 4.500 0 1 0 12.400 8.800H9M12.300 8.800v3" stroke="#fff" strokeWidth="1.400" fill="none" /></svg></ToolSlot>
        <ToolSlot><svg width="15" height="15" viewBox="0 0 15 15"><path d="M1 3.500h3.500a2 2 0 1 1 4 0H12V7a2 2 0 1 1 0 4v3.500H8.600a2 2 0 0 0-4 0H1V11a2 2 0 0 0 0-4z" fill="#fff" /></svg></ToolSlot>
        <ToolSlot><svg width="14" height="14"><path d="M0 0h14v14H0zM2 2.500v9h7v-9z" fill="#fff" fillRule="evenodd" /></svg></ToolSlot>
        <ToolSlot>
          <svg width="22" height="22" viewBox="0 0 22 22">
            <circle cx="11" cy="11" r="11" fill="#3c3b3d" /><path d="M3 5l5 3 1 6-4 2zM13 3l5 6-3 6z" fill="#7d2830" /><path d="M7 3l5-1 3 4-3 3zM10 11l6 2-4 4z" fill="#c9bfbf" /><path d="M10 4l3 1-2 3z" fill="#d6a04a" /><path d="M4 14l3 3M14 17l4-3" stroke="#b5aeb0" strokeWidth="1.200" /><path d="M5 3l9 16M17 5L7 20" stroke="#1a1a1c" />
          </svg>
        </ToolSlot>
        <ToolSlot><svg width="4" height="14" fill="#fff"><circle cx="2" cy="2" r="1.600" /><circle cx="2" cy="7" r="1.600" /><circle cx="2" cy="12" r="1.600" /></svg></ToolSlot>
      </Toolbar>

      <Bookmarks>
        {bookmarks.map((b, i) => (
          <Bookmark key={i} $w={b.w}>{b.icon}{b.label && <Fit w={b.tw!}>{b.label}</Fit>}</Bookmark>
        ))}
        <More><svg width="9" height="8" fill="none" stroke="#fff" strokeWidth="1.600"><path d="M1 1l3 3-3 3M5 1l3 3-3 3" /></svg></More>
      </Bookmarks>

      <Page>
        <Site>
          <SiteHeader>
            <svg width="120" height="42">
              <rect width="120" height="42" fill="#c8102e" />
              <text x="1" y="38.500" fontFamily="Lato" fontSize="48" fill="#fff" textLength="60" lengthAdjust="spacingAndGlyphs">UH</text>
              <text x="64" y="38.500" fontFamily="Lato" fontWeight="900" fontSize="48" fill="#fff" textLength="55" lengthAdjust="spacingAndGlyphs">CS</text>
            </svg>
            <UserNav>
              <Divider />
              <NavIcons><FaRegBell size={17} /><FaRegComment size={16} /></NavIcons>
              <UserName><Fit w={48}>Huy Vo</Fit></UserName>
              <Avatar><Fit w={20}>HV</Fit></Avatar>
              <Chevron><svg width="8" height="6" fill="none" stroke="#6a737b" strokeWidth="1.600"><path d="M.8 1L4 4.300 7.200 1" /></svg></Chevron>
            </UserNav>
          </SiteHeader>

          <Main>
            <QuestionRow>
              <Info $clipped>
                <InfoLine $light><Fit w={58}>Information</Fit></InfoLine>
                <FlagLink gap={5.100} />
              </Info>
              <Card $h={462} $top={10.500} $flat>
                <Heading><Fit w={576}>Given the following two-level memory system:</Fit></Heading>
                <List>{facts.map(([t, w]) => <Item key={t}><Fit w={w}>{t}</Fit></Item>)}</List>
                <Calculate><Fit w={106}>Calculate</Fit><i>:</i></Calculate>
              </Card>
            </QuestionRow>

            <QuestionRow>
              <QuestionInfo n="14" state={['Correct', 39]} mark="Mark 6.00 out of" />
              <Stack>
                <Card $h={171} $top={12}>
                  <Prompt>
                    <Fit w={242}>Miss Ratio in percentage (</Fit><b><Fit w={348}>do not include the percentage sign</Fit></b><Fit w={11}>):</Fit>
                  </Prompt>
                  <AnswerLine>
                    <Fit w={52}>Answer:</Fit><AnswerBox><Fit w={20}>0.2</Fit></AnswerBox><FaCheck size={14} color="#357a32" />
                  </AnswerLine>
                </Card>
                <Feedback><Fit w={163}>The correct answer is: 20</Fit></Feedback>
              </Stack>
            </QuestionRow>

            <QuestionRow>
              <QuestionInfo n="15" state={['Incorrect', 47]} mark="Mark 0.00 out of" />
              <Card $h={400} $top={20}>
                <Prompt><Fit w={239}>Given the following code:</Fit></Prompt>
                <Code><div><Fit w={289}>void * func(void  * pointer)</Fit></div><div>{'{'}</div></Code>
              </Card>
            </QuestionRow>
          </Main>
        </Site>
        <ScrollTrack>
          <svg width="7" height="5"><path d="M0 4.500L3.500 0 7 4.500z" fill="#505050" /></svg>
          <Thumb />
          <svg width="7" height="5"><path d="M0 .5L3.500 5 7 .5z" fill="#505050" /></svg>
        </ScrollTrack>
      </Page>

      <Taskbar>
        <StartButton><svg width="16" height="16" fill="#fff"><path d="M0 2.300L6.500 1.400v6.200H0zM7.300 1.300L16 0v7.600H7.300zM0 8.400h6.500v6.200L0 13.700zM7.300 8.400H16V16l-8.700-1.300z" /></svg></StartButton>
        <Search>
          <svg width="17" height="17" fill="none" stroke="#e6e6e6" strokeWidth="1.300"><circle cx="10.500" cy="6.200" r="5.300" /><path d="M6.700 10L.8 15.800" /></svg>
          <Fit w={128}>Type here to search</Fit>
          <Desert />
        </Search>
        <TaskView><svg width="17" height="16" fill="none" stroke="#fff" strokeWidth="1.200"><path d="M1 4.500h10.500v7H1zM1 0v2h10.500V0M1 16v-2h10.500v2M15 0v3M15 8v8" /><rect x="14" y="4.500" width="2" height="2" fill="#fff" stroke="none" /></svg></TaskView>
        <TaskApp $line="#8ee4d8" $two><div><Explorer /></div></TaskApp>
        <TaskApp><div><VS /></div></TaskApp>
        <TaskApp $line="#8ee4d8"><div><VSCode /></div></TaskApp>
        <TaskApp><div><Steam /></div></TaskApp>
        <TaskApp><div><Unity /></div></TaskApp>
        <TaskApp><div><Outlook /></div></TaskApp>
        <TaskApp><div><Opera /></div></TaskApp>
        <ChromeSlot><div><Chrome /></div></ChromeSlot>
        <TaskApp $line="#8ee4d8" $two><div><Notepad /></div></TaskApp>
        <SteamSlot $bg="#444a54"><div><Steam /></div></SteamSlot>
        <TaskApp $line="#8ee4d8"><div><svg width="24" height="24"><circle cx="12" cy="12" r="12" fill="#5865f2" /><FaDiscord x="4.500" y="4.500" size={15} color="#fff" /></svg></div></TaskApp>
        <TaskApp $line="#8ee4d8"><div><Snip /></div></TaskApp>

        <Tray>
          <Weather><Rain /><Fit w={29}>14°C</Fit><Fit w={81}>Rain showers</Fit></Weather>
          <TrayIcons>
            <svg width="12" height="7" fill="none" stroke="#fff" strokeWidth="1.200"><path d="M.5 6.500l5.500-5.500 5.500 5.500" /></svg>
            <svg width="36" height="18" viewBox="-12 0 36 18"><rect x="2.500" y="1" width="7" height="11" rx="1" fill="#fff" /><path d="M.7 9c0 7 10.600 7 10.600 0M6 14v3M3.500 16.500h5" stroke="#fff" fill="none" strokeWidth="1.200" /></svg>
            <svg width="13" height="14" fill="none" stroke="#aaa" strokeWidth="1.200"><path d="M.7 13A12 12 0 0 1 13 1M3.700 13A9 9 0 0 1 13 4.500" stroke="#888" /><path d="M6.500 13a6.500 6.500 0 0 1 6.500-5.500" stroke="#fff" /><circle cx="11" cy="12" r="1.500" fill="#fff" stroke="none" /></svg>
            <svg width="27" height="16" viewBox="-9 0 27 16" fill="none" stroke="#fff" strokeWidth="1.200"><path d="M.6 5.500h3L6.800 2v12l-3.200-3.500h-3zM9 5.500q2 2.500 0 5M11.500 3.500q3.500 4.500 0 9M14 1.500q5 6.500 0 13" /></svg>
            <svg width="27" height="18" viewBox="-10 0 27 18" fill="none" stroke="#fff" strokeWidth="1.200"><path d="M3 10C0 10 0 15 3 15.500c2 .3 3-3 4-6l3-7c1-2 3-1.500 2.500.5L9 12l-2 3 .5-4L11 4M11 9c3-3 5-1 4 1-1 1.500-3 .5-4-1" /></svg>
          </TrayIcons>
          <Clock><Fit w={48}>12:45 AM</Fit><Fit w={46}>4/6/2023</Fit></Clock>
          <svg width="26" height="28" viewBox="0 0 26 28">
            <path d="M0 3h16v14H7.500L4 20v-3H0z" fill="#fff" /><path d="M2.500 6.500h11M2.500 9.500h11M2.500 12.500h7" stroke="#20232e" strokeWidth="1.100" />
            <circle cx="15.500" cy="18.500" r="7.800" fill="#33353c" stroke="#8b8d92" strokeWidth="1.200" /><text x="15.500" y="22.500" textAnchor="middle" fontSize="11" fontWeight="600" fontFamily="Open Sans" fill="#fff">9</text>
          </svg>
          <ShowDesktop />
        </Tray>
      </Taskbar>
    </Screen>
  );
}
